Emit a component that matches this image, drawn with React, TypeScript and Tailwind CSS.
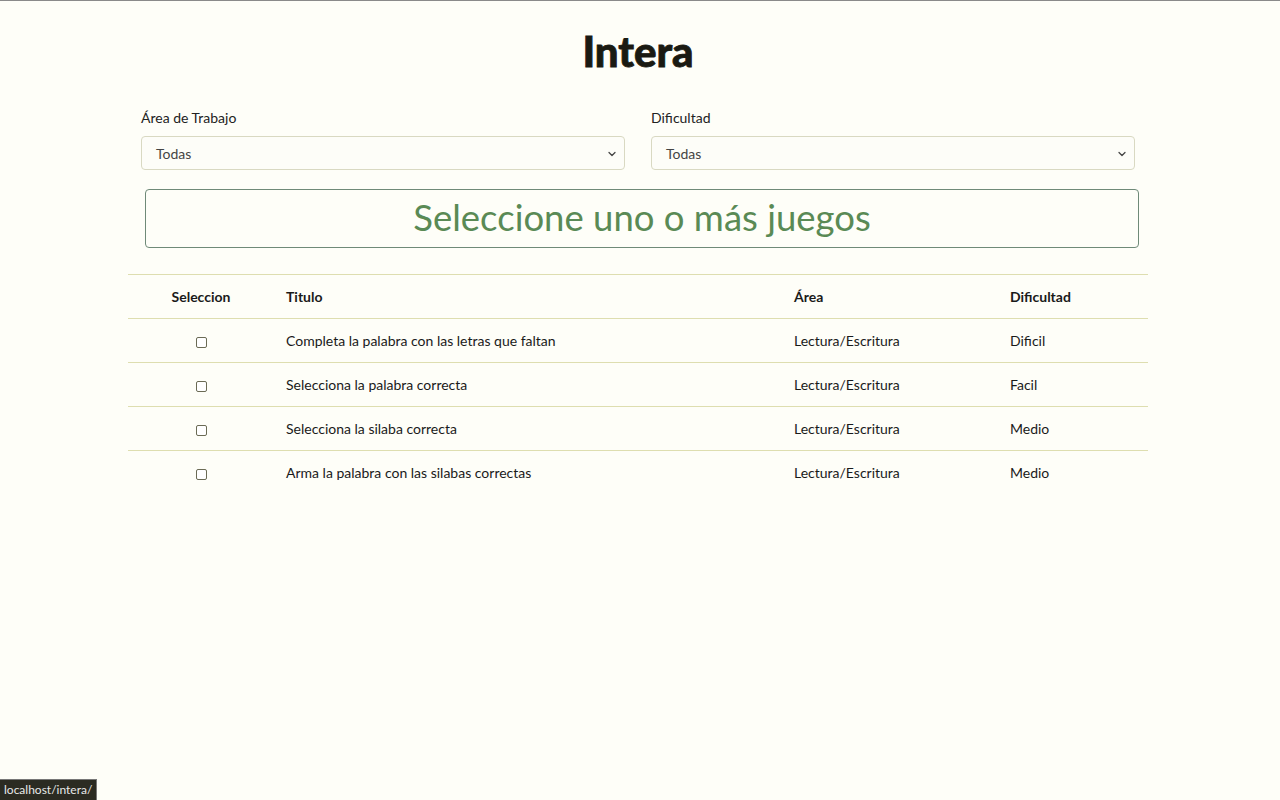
import { ChevronDown } from 'lucide-react';

const juegos = [
  { titulo: 'Completa la palabra con las letras que faltan', area: 'Lectura/Escritura', dificultad: 'Dificil' },
  { titulo: 'Selecciona la palabra correcta', area: 'Lectura/Escritura', dificultad: 'Facil' },
  { titulo: 'Selecciona la silaba correcta', area: 'Lectura/Escritura', dificultad: 'Medio' },
  { titulo: 'Arma la palabra con las silabas correctas', area: 'Lectura/Escritura', dificultad: 'Medio' },
];

function Filtro({ label }: { label: string }) {
  return (
    <div className="flex flex-col">
      <label className="text-[14px] text-[#222] leading-5 mb-[8px]">{label}</label>
      <div className="relative h-[34px] border border-[#d9d9c2] rounded-[4px] bg-[#fdfdf8] flex items-center px-[14px]">
        <span className="text-[14px] text-[#444]">Todas</span>
        <ChevronDown size={12} strokeWidth={2.5} className="absolute right-[6px] top-[11px] text-[#444]" />
      </div>
    </div>
  );
}

export default function App() {
  return (
    <div
      className="min-h-[800px] w-full bg-[#fefef8] border-t border-[#8a8a8a] relative text-[#1a1a1a]"
      style={{ fontFamily: 'Lato, "Open Sans", sans-serif' }}
    >
      <div className="w-[1020px] ml-[128px] pt-[28px]">
        <h1 className="text-center text-[42px] font-black leading-[44px] text-[#1a1a12] [-webkit-text-stroke:0.8px_#1a1a12]">
          Intera
        </h1>

        <div className="grid grid-cols-2 gap-[26px] px-[13px] mt-[35px]">
          <Filtro label="Área de Trabajo" />
          <Filtro label="Dificultad" />
        </div>

        <div className="ml-[17px] mr-[9px] mt-[19px] h-[59px] border border-[#6f8a78] rounded-[4px] flex items-center justify-center">
          <span className="text-[36.5px] text-[#5a8a55] leading-none pb-[2px]">Seleccione uno o más juegos</span>
        </div>

        <table className="w-full mt-[26px] border-collapse text-[14px]">
          <thead>
            <tr className="border-t border-b border-[#dedeb0] h-[44px]">
              <th className="w-[146px] text-center font-bold">Seleccion</th>
              <th className="text-left font-bold pl-[12px]">Titulo</th>
              <th className="w-[216px] text-left font-bold">Área</th>
              <th className="w-[138px] text-left font-bold">Dificultad</th>
            </tr>
          </thead>
          <tbody>
            {juegos.map((j, i) => (
              <tr
                key={j.titulo}
                className={i < juegos.length - 1 ? 'border-b border-[#dedeb0] h-[44px]' : 'h-[44px]'}
              >
                <td className="text-center">
                  <span className="inline-block w-[11px] h-[11px] border border-[#6b6b55] rounded-[2px] bg-white align-middle" />
                </td>
                <td className="pl-[12px]">{j.titulo}</td>
                <td>{j.area}</td>
                <td>{j.dificultad}</td>
              </tr>
            ))}
          </tbody>
        </table>
      </div>

      <div className="absolute left-0 bottom-0 h-[21px] px-[4px] bg-[#2b2b22] border-t border-r border-[#777] text-[12px] text-[#e8e8e8] flex items-center">
        localhost/intera/
      </div>
    </div>
  );
}
